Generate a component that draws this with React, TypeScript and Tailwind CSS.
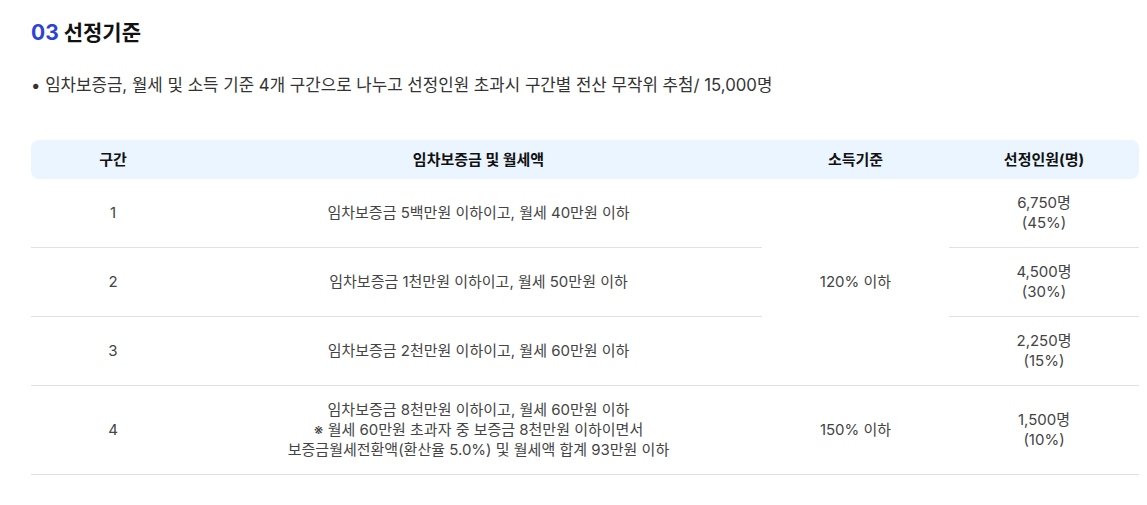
const rows = [
  { no: '1', rent: ['임차보증금 5백만원 이하이고, 월세 40만원 이하'], count: '6,750명', pct: '(45%)' },
  { no: '2', rent: ['임차보증금 1천만원 이하이고, 월세 50만원 이하'], count: '4,500명', pct: '(30%)' },
  { no: '3', rent: ['임차보증금 2천만원 이하이고, 월세 60만원 이하'], count: '2,250명', pct: '(15%)' },
  {
    no: '4',
    rent: [
      '임차보증금 8천만원 이하이고, 월세 60만원 이하',
      '※ 월세 60만원 초과자 중 보증금 8천만원 이하이면서',
      '보증금월세전환액(환산율 5.0%) 및 월세액 합계 93만원 이하',
    ],
    count: '1,500명',
    pct: '(10%)',
  },
];

export default function App() {
  const cell = 'border-b border-[#e2e2e2] py-[14px] text-center align-middle';

  return (
    <div
      className="bg-white pl-[31px] pt-[19px] pb-8 text-[#444]"
      style={{ fontFamily: 'Inter, "Noto Sans CJK KR", sans-serif' }}
    >
      <h2 className="text-[21px] font-bold leading-7 text-[#111]">
        <span className="text-[#2b43d6]">03</span> 선정기준
      </h2>

      <p className="mt-[26px] text-[16.8px] leading-6 text-[#333]">
        • 임차보증금, 월세 및 소득 기준 4개 구간으로 나누고 선정인원 초과시 구간별 전산 무작위 추첨/ 15,000명
      </p>

      <table className="mt-[43px] w-[1108px] table-fixed border-separate border-spacing-0 text-[15px] leading-5">
        <colgroup>
          <col className="w-[164px]" />
          <col className="w-[567px]" />
          <col className="w-[187px]" />
          <col className="w-[190px]" />
        </colgroup>
        <thead>
          <tr className="h-[39px] text-[#111]">
            <th className="rounded-l-lg bg-[#ebf5ff] font-bold">구간</th>
            <th className="bg-[#ebf5ff] font-bold">임차보증금 및 월세액</th>
            <th className="bg-[#ebf5ff] font-bold">소득기준</th>
            <th className="rounded-r-lg bg-[#ebf5ff] font-bold">선정인원(명)</th>
          </tr>
        </thead>
        <tbody>
          {rows.map((r, i) => (
            <tr key={r.no}>
              <td className={cell}>{r.no}</td>
              <td className={cell}>
                {r.rent.map((line) => (
                  <div key={line}>{line}</div>
                ))}
              </td>
              {i === 0 && (
                <td rowSpan={3} className={cell}>
                  120% 이하
                </td>
              )}
              {i === 3 && <td className={cell}>150% 이하</td>}
              <td className={cell}>
                <div>{r.count}</div>
                <div>{r.pct}</div>
              </td>
            </tr>
          ))}
        </tbody>
      </table>
    </div>
  );
}
